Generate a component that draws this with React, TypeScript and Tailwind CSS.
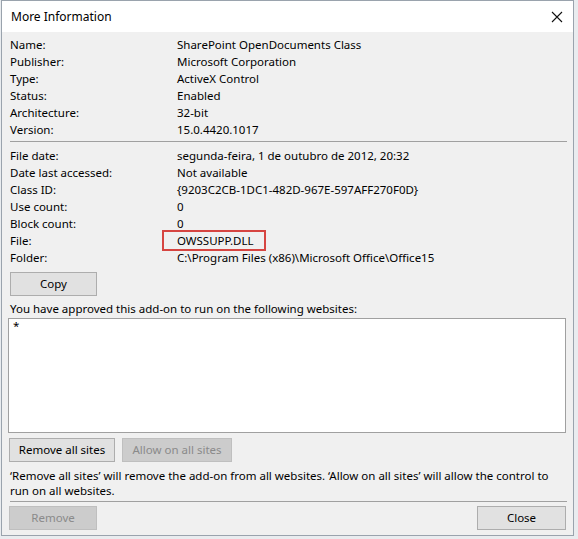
import React from "react";

const general: [string, string][] = [
  ["Name:", "SharePoint OpenDocuments Class"],
  ["Publisher:", "Microsoft Corporation"],
  ["Type:", "ActiveX Control"],
  ["Status:", "Enabled"],
  ["Architecture:", "32-bit"],
  ["Version:", "15.0.4420.1017"],
];

const details: [string, string][] = [
  ["File date:", "segunda-feira, 1 de outubro de 2012, 20:32"],
  ["Date last accessed:", "Not available"],
  ["Class ID:", "{9203C2CB-1DC1-482D-967E-597AFF270F0D}"],
  ["Use count:", "0"],
  ["Block count:", "0"],
  ["File:", "OWSSUPP.DLL"],
  ["Folder:", "C:\\Program Files (x86)\\Microsoft Office\\Office15"],
];

function Row({ label, value, marked }: { label: string; value: string; marked?: boolean }) {
  return (
    <div className="flex h-[17px] items-center leading-[17px]">
      <span className="w-[167px] shrink-0">{label}</span>
      <span className="relative">
        {value}
        {marked && (
          <span className="pointer-events-none absolute left-[-15px] top-[-2px] h-[21px] w-[104px] border-2 border-[#d64541]" />
        )}
      </span>
    </div>
  );
}

function Button({
  children,
  disabled,
  className,
}: {
  children: React.ReactNode;
  disabled?: boolean;
  className?: string;
}) {
  return (
    <button
      className={
        "flex h-[24px] items-center justify-center border " +
        (disabled
          ? "border-[#bfbfbf] bg-[#cccccc] text-[#8a8a8a] "
          : "border-[#adadad] bg-[#e1e1e1] text-black ") +
        (className ?? "")
      }
    >
      {children}
    </button>
  );
}

export default function App() {
  return (
    <div className="h-[539px] w-[578px] bg-[#e9ecef] pl-[1px] font-['Noto_Sans',sans-serif] text-[11.5px] text-black">
      <div className="flex h-[536px] w-[573px] flex-col border border-[#9aa3ad] bg-[#f0f0f0]">
        {/* title bar */}
        <div className="flex h-[31px] shrink-0 items-center justify-between bg-white pl-[9px] pr-[10px]">
          <span className="text-[12px]">More Information</span>
          <svg width="12" height="12" viewBox="0 0 12 12">
            <path d="M1 1L11 11M11 1L1 11" stroke="#111" strokeWidth="1.1" />
          </svg>
        </div>

        <div className="flex flex-col px-[8px] pt-[4px]">
          <div className="flex flex-col">
            {general.map(([l, v]) => (
              <Row key={l} label={l} value={v} />
            ))}
          </div>
          <div className="mr-[-2px] mt-[3px] border-t border-[#a0a0a0]" />
          <div className="mt-[5px] flex flex-col">
            {details.map(([l, v]) => (
              <Row key={l} label={l} value={v} marked={l === "File:"} />
            ))}
          </div>

          <Button className="mt-[6px] w-[87px]">Copy</Button>

          <div className="mt-[4px] h-[17px] leading-[17px]">
            You have approved this add-on to run on the following websites:
          </div>
          <div className="ml-[-2px] mt-[1px] h-[115px] w-[558px] border border-[#a0a0a0] bg-white px-[4px] leading-[14px]">
            *
          </div>

          <div className="ml-[-1px] mt-[5px] flex gap-[7px]">
            <Button className="w-[106px]">Remove all sites</Button>
            <Button disabled className="w-[110px]">
              Allow on all sites
            </Button>
          </div>

          <p className="mt-[6px] leading-[15px]">
            ‘Remove all sites’ will remove the add-on from all websites. ‘Allow on all sites’ will allow the control to
            run on all websites.
          </p>
          <div className="mr-[-2px] mt-[3px] border-t border-[#a0a0a0]" />

          <div className="ml-[-1px] mt-[4px] flex justify-between">
            <Button disabled className="w-[88px]">
              Remove
            </Button>
            <Button className="mr-[-1px] w-[89px]">Close</Button>
          </div>
        </div>
      </div>
    </div>
  );
}
